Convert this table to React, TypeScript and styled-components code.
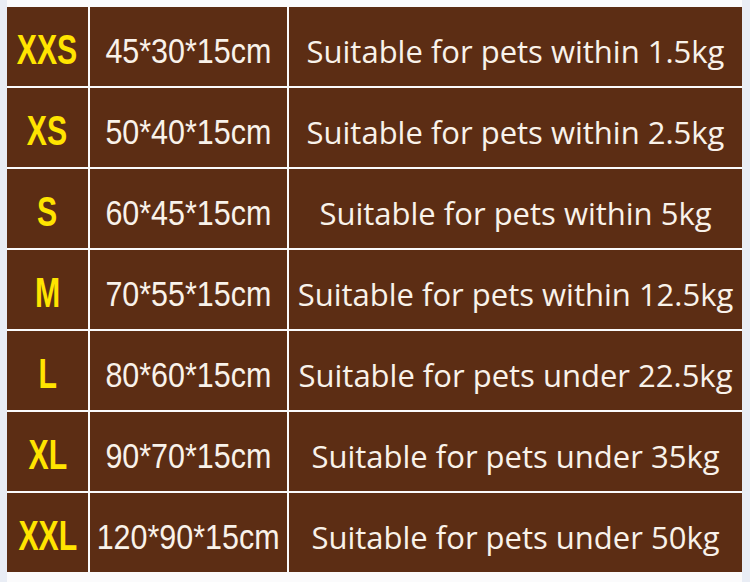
import React from "react";
import styled, { createGlobalStyle } from "styled-components";

const Global = createGlobalStyle`
  html, body {
    margin: 0;
    padding: 0;
  }
  body {
    width: 750px;
    height: 582px;
    overflow: hidden;
    background: linear-gradient(to right, #e9edf5 0 7px, #fbfbfc 7px 742px, #e9edf5 742px);
  }
`;

const Page = styled.div`
  padding: 7px 8px 0 7px;
`;

const Table = styled.div`
  display: grid;
  grid-template-columns: 81px 197px 453px;
  grid-auto-rows: 79px;
  column-gap: 2px;
  row-gap: 2px;
  width: 735px;
`;

type Kind = "size" | "dim" | "desc";

const padTop: Record<Kind, string> = { size: "6px", dim: "7px", desc: "9px" };

const Cell = styled.div<{ $kind: Kind }>`
  background: #5c2d14;
  display: flex;
  align-items: center;
  justify-content: center;
  padding-top: ${(p) => padTop[p.$kind]};
  box-sizing: border-box;
  overflow: hidden;
  white-space: nowrap;
`;

const SizeText = styled.span`
  display: inline-block;
  font-family: "Liberation Sans", Arial, sans-serif;
  font-weight: bold;
  font-size: 42px;
  line-height: 1;
  color: #ffe400;
  transform: scaleX(0.72);
`;

const DimText = styled.span`
  display: inline-block;
  font-family: "Liberation Sans", Arial, sans-serif;
  font-size: 35px;
  line-height: 1;
  color: #f9f2ea;
  transform: scaleX(0.87);
`;

const DescText = styled.span`
  display: inline-block;
  font-family: "Open Sans", "Noto Sans", sans-serif;
  font-size: 31px;
  line-height: 1;
  color: #f9f2ea;
`;

const rows = [
  ["XXS", "45*30*15cm", "Suitable for pets within 1.5kg"],
  ["XS", "50*40*15cm", "Suitable for pets within 2.5kg"],
  ["S", "60*45*15cm", "Suitable for pets within 5kg"],
  ["M", "70*55*15cm", "Suitable for pets within 12.5kg"],
  ["L", "80*60*15cm", "Suitable for pets under 22.5kg"],
  ["XL", "90*70*15cm", "Suitable for pets under 35kg"],
  ["XXL", "120*90*15cm", "Suitable for pets under 50kg"],
];

export default function App() {
  return (
    <>
      <Global />
      <Page>
        <Table>
          {rows.map(([size, dim, desc]) => (
            <React.Fragment key={size}>
              <Cell $kind="size">
                <SizeText>{size}</SizeText>
              </Cell>
              <Cell $kind="dim">
                <DimText>{dim}</DimText>
              </Cell>
              <Cell $kind="desc">
                <DescText>{desc}</DescText>
              </Cell>
            </React.Fragment>
          ))}
        </Table>
      </Page>
    </>
  );
}
